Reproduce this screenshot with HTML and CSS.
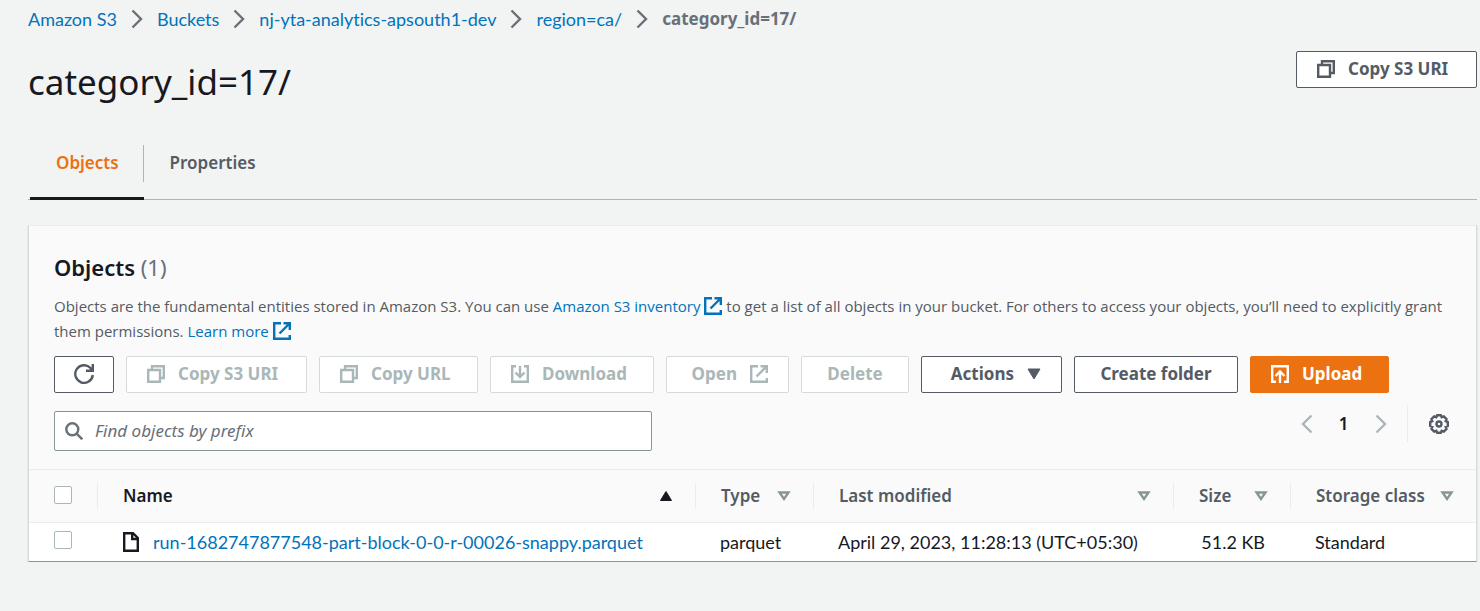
FILE: index.html
```html
<!DOCTYPE html>
<html lang="en">
<head>
<meta charset="utf-8">
<title>category_id=17/ - S3 bucket</title>
<link rel="stylesheet" href="styles.css">
</head>
<body>
<svg class="sprite" aria-hidden="true">
  <symbol id="i-chevron" viewBox="0 0 12 20"><path d="M1.500 1.500 10 10l-8.500 8.500"/></symbol>
  <symbol id="i-copy" viewBox="0 0 18 18"><path d="M5 4V1.200h11.800V13H14M1.200 5H13v11.800H1.200z"/></symbol>
  <symbol id="i-external" viewBox="0 0 18 18"><path d="M8 1.200H1.200v15.600h15.600V13M10.500 1.200h6.300V8M16.500 1.500 6.500 11.500"/></symbol>
  <symbol id="i-download" viewBox="0 0 18 18"><path d="M5 1.200H1.200v15.600h15.600V1.200H13M9 1v11M4.500 7.500 9 12l4.500-4.500"/></symbol>
  <symbol id="i-upload" viewBox="0 0 18 18"><path d="M5 16.800H1.200V1.200h15.600v15.600H13M9 18V6.500M4.500 11 9 6.500l4.500 4.500"/></symbol>
  <symbol id="i-refresh" viewBox="0 0 20 20"><path d="M18.800 11A8.800 8.800 0 1 1 16.500 4L18.500 6.500M18.800 0v6.800H12"/></symbol>
  <symbol id="i-search" viewBox="0 0 18 18"><circle cx="7.300" cy="7.300" r="6"/><path d="m11.800 11.800 5.500 5.500"/></symbol>
  <symbol id="i-file" viewBox="0 0 16 20"><path d="M1.200 1.200H10L14.800 6v12.800H1.200zM9.200 1v6H15"/></symbol>
  <symbol id="i-gear" viewBox="0 0 20 20"><path d="M8.200 1.200h3.600l.9 2 2.100-.8 2.700 2.700-.8 2.100 2.100.9v3.800l-2.100.9.8 2.100-2.700 2.700-2.100-.8-.9 2H8.200l-.9-2-2.100.8-2.700-2.700.8-2.100-2.100-.9V8.100l2.100-.9-.8-2.100 2.700-2.700 2.100.8z"/><circle cx="10" cy="10" r="2.500"/></symbol>
  <symbol id="i-down" viewBox="0 0 14 12"><path class="solid" d="M1 1h12L7 11z"/></symbol>
  <symbol id="i-up" viewBox="0 0 14 12"><path class="solid" d="M1.500 10.500h11L7 1.500z"/></symbol>
  <symbol id="i-sort" viewBox="0 0 14 12"><path d="M2.500 2.500h9L7 9z"/></symbol>
</svg>

<main class="page">
  <nav class="crumbs" aria-label="Breadcrumbs">
    <a href="#">Amazon S3</a>
    <svg class="chevron"><use href="#i-chevron"/></svg>
    <a href="#">Buckets</a>
    <svg class="chevron"><use href="#i-chevron"/></svg>
    <a href="#">nj-yta-analytics-apsouth1-dev</a>
    <svg class="chevron"><use href="#i-chevron"/></svg>
    <a href="#">region=ca/</a>
    <svg class="chevron"><use href="#i-chevron"/></svg>
    <span class="current">category_id=17/</span>
  </nav>

  <header class="title-bar">
    <h1>category_id=17/</h1>
    <button class="btn lead w-copy"><svg class="icon"><use href="#i-copy"/></svg>Copy S3 URI</button>
  </header>

  <div class="tabs" role="tablist">
    <button class="tab active" role="tab" aria-selected="true"><span>Objects</span></button>
    <button class="tab" role="tab" aria-selected="false"><span>Properties</span></button>
  </div>

  <section class="panel">
    <div class="panel-head">
      <h2>Objects <span class="count">(1)</span></h2>
      <p class="description">Objects are the fundamental entities stored in Amazon S3. You can use <a href="#">Amazon S3 inventory<svg class="icon"><use href="#i-external"/></svg></a> to get a list of all objects in your bucket. For others to access your objects, you’ll need to explicitly grant them permissions. <a href="#">Learn more<svg class="icon"><use href="#i-external"/></svg></a></p>
      <div class="actions">
        <button class="btn w-refresh" aria-label="Refresh"><svg class="refresh"><use href="#i-refresh"/></svg></button>
        <button class="btn lead w-copy" disabled><svg class="icon"><use href="#i-copy"/></svg>Copy S3 URI</button>
        <button class="btn lead w-url" disabled><svg class="icon"><use href="#i-copy"/></svg>Copy URL</button>
        <button class="btn lead w-download" disabled><svg class="icon"><use href="#i-download"/></svg>Download</button>
        <button class="btn trail w-open" disabled>Open<svg class="icon"><use href="#i-external"/></svg></button>
        <button class="btn w-delete" disabled>Delete</button>
        <button class="btn trail w-actions">Actions<svg class="triangle"><use href="#i-down"/></svg></button>
        <button class="btn w-folder">Create folder</button>
        <button class="btn lead primary w-upload"><svg class="icon"><use href="#i-upload"/></svg>Upload</button>
      </div>
      <div class="filter-row">
        <label class="search">
          <svg class="icon"><use href="#i-search"/></svg>
          <input type="text" placeholder="Find objects by prefix" aria-label="Find objects by prefix">
        </label>
        <div class="pager">
          <button class="page-btn" aria-label="Previous page"><svg class="chevron flip"><use href="#i-chevron"/></svg></button>
          <button class="page-btn number">1</button>
          <button class="page-btn" aria-label="Next page"><svg class="chevron"><use href="#i-chevron"/></svg></button>
          <button class="settings" aria-label="Preferences"><svg class="gear"><use href="#i-gear"/></svg></button>
        </div>
      </div>
    </div>

    <table class="objects">
      <colgroup><col class="c-check"><col><col class="c-type"><col class="c-modified"><col class="c-size"><col class="c-class"></colgroup>
      <thead>
        <tr>
          <th class="check"><div class="head"><input type="checkbox" aria-label="Select all"></div></th>
          <th class="sorted"><div class="head">Name<svg class="triangle"><use href="#i-up"/></svg></div></th>
          <th><div class="head">Type<svg class="triangle"><use href="#i-sort"/></svg></div></th>
          <th><div class="head">Last modified<svg class="triangle"><use href="#i-sort"/></svg></div></th>
          <th><div class="head">Size<svg class="triangle"><use href="#i-sort"/></svg></div></th>
          <th><div class="head">Storage class<svg class="triangle"><use href="#i-sort"/></svg></div></th>
        </tr>
      </thead>
      <tbody>
        <tr>
          <td class="check"><input type="checkbox" aria-label="Select object"></td>
          <td><a class="file" href="#"><svg class="file-icon"><use href="#i-file"/></svg>run-1682747877548-part-block-0-0-r-00026-snappy.parquet</a></td>
          <td>parquet</td>
          <td>April 29, 2023, 11:28:13 (UTC+05:30)</td>
          <td class="num">51.2 KB</td>
          <td>Standard</td>
        </tr>
      </tbody>
    </table>
  </section>
</main>
</body>
</html>
```
FILE: styles.css
```css
* { box-sizing: border-box; }

body {
  margin: 0;
  background: #f2f3f3;
  color: #16191f;
  font-family: "Noto Sans", "Open Sans", sans-serif;
  font-size: 17px;
  line-height: 24px;
  font-variant-ligatures: none;
}

a { color: #0073bb; text-decoration: none; }
button, input { font: inherit; }
svg { flex: none; fill: none; stroke: currentColor; stroke-width: 2.4; }
.solid { fill: currentColor; stroke-width: 1; stroke-linejoin: round; }
.sprite { display: none; }
.icon { width: 18px; height: 18px; }
.chevron { width: 12px; height: 20px; }
.triangle { width: 14px; height: 12px; }
.refresh, .gear { width: 20px; height: 20px; }

.page { padding: 7px 3px 0 28px; }

.crumbs { display: flex; align-items: center; gap: 14px; }
.crumbs a { font-family: Lato, "Noto Sans", sans-serif; font-size: 18px; }
.crumbs .chevron { color: #687078; }
.crumbs .current { color: #687078; font-weight: 700; }

.title-bar {
  display: flex;
  justify-content: space-between;
  align-items: flex-start;
  padding-top: 20px;
}
h1 {
  margin: 8px 0 0;
  font-size: 35px;
  line-height: 46px;
  font-weight: 400;
}

.btn {
  display: flex;
  align-items: center;
  justify-content: center;
  gap: 13px;
  height: 37px;
  padding: 0 8px 2px;
  border: 1px solid #545b64;
  border-radius: 2px;
  background: #fff;
  color: #545b64;
  font-weight: 700;
  white-space: nowrap;
}
.btn.lead { justify-content: flex-start; padding-left: 20px; }
.btn.trail { justify-content: flex-end; padding-right: 20px; }
.btn:disabled { border-color: #d5dbdb; color: #aab7b8; }
.btn.primary { border-color: #ec7211; background: #ec7211; color: #fff; }
.w-refresh { min-width: 60px; }
.w-copy { min-width: 181px; }
.w-url { min-width: 159px; }
.w-download { min-width: 164px; }
.w-open { min-width: 123px; }
.w-delete { min-width: 108px; }
.w-actions { min-width: 141px; }
.w-folder { min-width: 164px; }
.w-upload { min-width: 139px; }

.tabs {
  display: flex;
  margin-top: 40px;
  padding-left: 2px;
  border-bottom: 1px solid #aab7b8;
}
.tab {
  margin-bottom: -1px;
  padding: 0 0 15px;
  border: 0;
  border-bottom: 3px solid transparent;
  background: none;
  color: #545b64;
  font-weight: 600;
}
.tab span { display: block; padding: 6px 24px 7px 26px; }
.tab.active { border-bottom-color: #16191f; color: #ec7211; }
.tab.active span { border-right: 1px solid #aab7b8; }

.panel {
  margin-top: 25px;
  border: 1px solid #d5dbdb;
  border-top-color: #eaeded;
  border-bottom-color: #879596;
  background: #fff;
  box-shadow: 0 1px 1px #aab7b8;
}
.panel-head { padding: 26px 18px 18px 25px; background: #fafafa; }
h2 { margin: 0; font-size: 22px; line-height: 30px; font-weight: 600; }
.count { color: #687078; font-weight: 400; }
.description {
  margin: 12px 0;
  color: #545b64;
  font-family: "Open Sans", "Noto Sans", sans-serif;
  font-size: 15px;
  line-height: 25px;
}
.description .icon { margin-left: 4px; vertical-align: -3px; }

.actions { display: flex; flex-wrap: wrap; gap: 12px; }

.filter-row {
  display: flex;
  justify-content: space-between;
  align-items: flex-start;
  margin-top: 18px;
}
.search {
  display: flex;
  align-items: center;
  flex: 0 1 598px;
  gap: 12px;
  height: 40px;
  padding: 0 10px;
  border: 1px solid #879596;
  border-radius: 2px;
  background: #fff;
  color: #687078;
}
.search input { flex: 1; min-width: 0; padding: 0; border: 0; outline: 0; background: none; }
.search input::placeholder { color: #687078; font-style: italic; opacity: 1; }

.pager { display: flex; align-items: center; margin-top: -6px; }
.page-btn, .settings {
  display: flex;
  align-items: center;
  justify-content: center;
  height: 37px;
  padding: 0;
  border: 0;
  background: none;
  color: #aab7b8;
}
.page-btn { width: 37px; }
.page-btn.number { color: #16191f; font-weight: 600; }
.flip { transform: scaleX(-1); }
.settings {
  margin-left: 8px;
  padding: 0 9px 0 21px;
  border-left: 1px solid #eaeded;
  color: #545b64;
}

.objects { width: 100%; table-layout: fixed; border-collapse: collapse; }
.c-check { width: 69px; }
.c-type { width: 118px; }
.c-modified { width: 360px; }
.c-size { width: 117px; }
.c-class { width: 185px; }
th {
  height: 53px;
  padding: 0;
  border-top: 1px solid #eaeded;
  border-bottom: 1px solid #eaeded;
  background: #fafafa;
  color: #545b64;
  font-weight: 600;
  text-align: left;
}
.sorted { color: #16191f; }
.head {
  display: flex;
  align-items: center;
  justify-content: space-between;
  height: 26px;
  padding: 0 22px 0 25px;
  border-right: 1px solid #eaeded;
  white-space: nowrap;
}
th:last-child .head { border-right: 0; }
.triangle { color: #879596; }
.sorted .triangle, .btn .triangle { color: inherit; }
td {
  height: 38px;
  padding: 0 0 0 24px;
  font-family: Lato, "Noto Sans", sans-serif;
  font-size: 18px;
  white-space: nowrap;
}
td.check { padding-left: 25px; }
td.num { padding: 0 26px 0 0; text-align: right; }
.file { display: flex; align-items: center; gap: 14px; }
.file-icon { width: 16px; height: 20px; margin-left: 1px; color: #16191f; }
input[type="checkbox"] {
  display: block;
  width: 18px;
  height: 18px;
  margin: 0 0 3px;
  appearance: none;
  border: 1px solid #aab7b8;
  border-radius: 2px;
  background: #fff;
}
```
